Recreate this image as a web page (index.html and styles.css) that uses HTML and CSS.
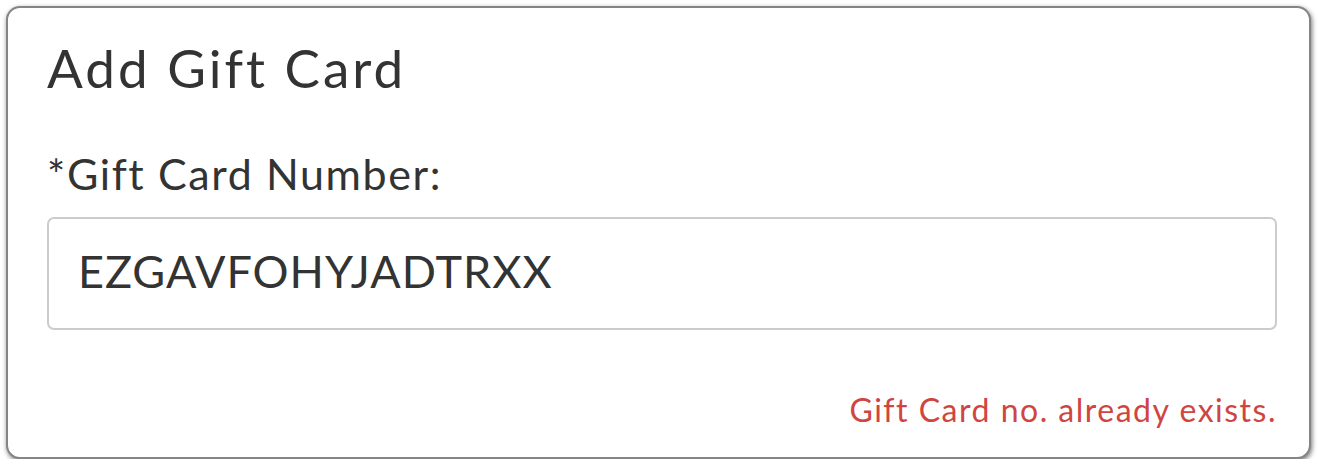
FILE: index.html
```html
<!DOCTYPE html>
<html lang="en">
<head>
<meta charset="utf-8">
<title>Add Gift Card</title>
<link rel="stylesheet" href="styles.css">
</head>
<body>
<div class="card">
  <h1 class="title">Add Gift Card</h1>
  <label class="label" for="gc">*Gift Card Number:</label>
  <input class="field" id="gc" type="text" value="EZGAVFOHYJADTRXX">
  <div class="error">Gift Card no. already exists.</div>
</div>
</body>
</html>
```
FILE: styles.css
```css
html, body {
  margin: 0;
  padding: 0;
  background: #ffffff;
}
body {
  font-family: Lato, "Liberation Sans", sans-serif;
  color: #333333;
}
.card {
  box-sizing: border-box;
  margin: 6px 0 0 6px;
  width: 1305px;
  height: 453px;
  border: 2px solid #858585;
  border-radius: 14px;
  box-shadow: 1px 2px 5px rgba(0, 0, 0, 0.55);
  background: #ffffff;
  padding: 28px 32px 0 39px;
  display: flex;
  flex-direction: column;
}
.title {
  margin: 0;
  font-size: 53px;
  line-height: 1.2;
  font-weight: 400;
  letter-spacing: 3px;
  color: #333333;
}
.label {
  margin-top: 48px;
  font-size: 43px;
  line-height: 1.2;
  letter-spacing: 1.6px;
  color: #333333;
}
.field {
  box-sizing: border-box;
  margin-top: 18px;
  width: 1230px;
  height: 113px;
  border: 2px solid #cccccc;
  border-radius: 7px;
  padding: 0 0 6px 29px;
  font-family: inherit;
  font-size: 45px;
  letter-spacing: 1px;
  color: #333333;
  background: #ffffff;
  outline: none;
}
.error {
  margin-top: 61px;
  align-self: flex-end;
  width: 1230px;
  text-align: right;
  font-size: 32px;
  line-height: 1.2;
  letter-spacing: 1.5px;
  color: #d0453f;
}
```
